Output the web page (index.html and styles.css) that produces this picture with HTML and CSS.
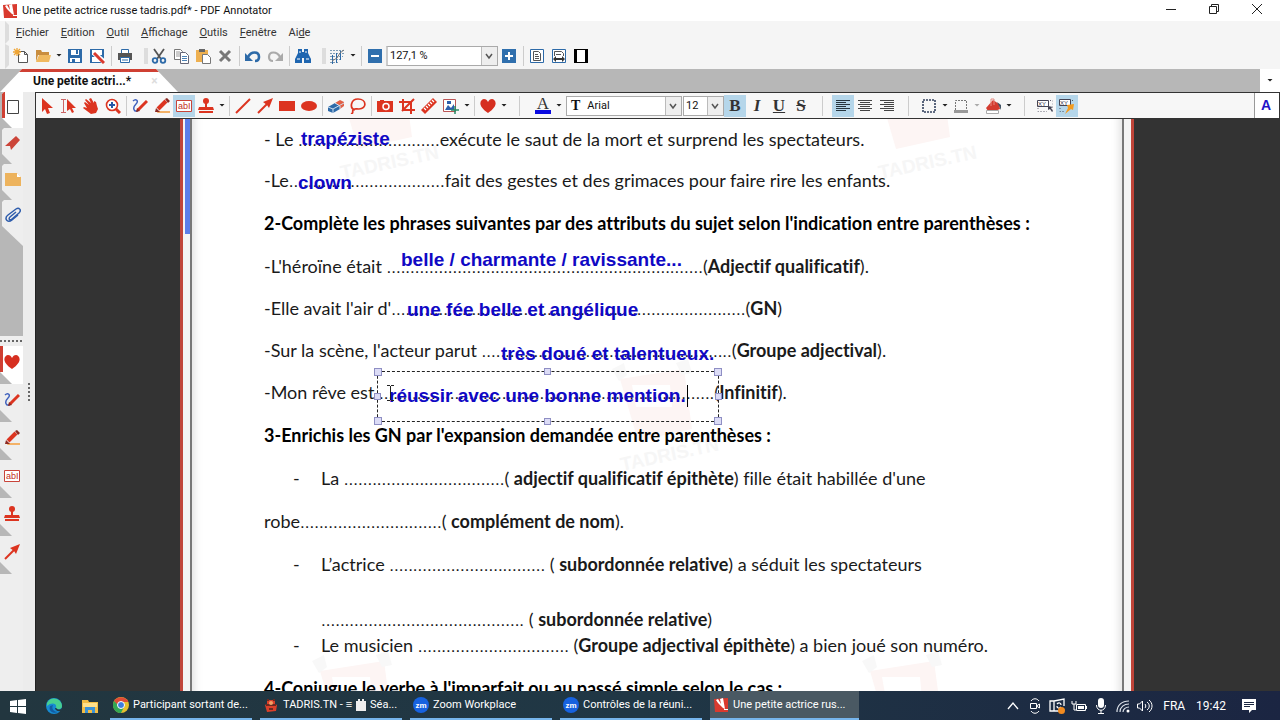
FILE: index.html
```html
<!doctype html>
<html lang="fr">
<head>
  <meta charset="utf-8">
  <title>Une petite actrice russe tadris.pdf* - PDF Annotator</title>
  <link rel="stylesheet" href="styles.css">
</head>
<body>
  <svg class="defs" aria-hidden="true">
    <symbol id="logo" viewBox="0 0 16 16"><path fill="#d93a2e" d="M1 2 15 1v14L2 15z"/><path fill="#fff" d="m3 3 2-1 3 5-1-5 3-1 2 11-2-1-5-5z"/><path fill="#fff" d="M11 12h4v1h-4z"/></symbol>
    <symbol id="new" viewBox="0 0 16 16"><path fill="#fff" stroke="#555" d="M5.500 3.500h6l3 3v8h-9zM11.500 3.500v3h3"/><path stroke="#efa535" stroke-width="1.300" d="M4 0v8M0 4h8M1 1l6 6M7 1 1 7"/></symbol>
    <symbol id="open" viewBox="0 0 16 16"><path fill="#c98d3e" d="M1 2h5l1 2h7v3H3l-2 7z"/><path fill="#f0b95f" d="M4 7h12l-2 7H1z"/></symbol>
    <symbol id="save" viewBox="0 0 16 16"><path fill="#2d6aa8" d="M1 1h14v14H1z"/><path fill="#fff" d="M4 2h8v5H4zM3 10h10v4H3z"/><path fill="#2d6aa8" d="M9 2h2v4H9zM5 11h3v3H5z"/></symbol>
    <symbol id="saveas" viewBox="0 0 16 16"><path fill="#2d6aa8" d="M1 1h14v14H1z"/><path fill="#fff" d="M3 2h10v5H3zM3 9h10v5H3z"/><path stroke="#fff" stroke-width="5" d="m5 5 10 9"/><path stroke="#d93a2e" stroke-width="3" d="m5 5 10 10"/></symbol>
    <symbol id="print" viewBox="0 0 16 16"><path fill="#fff" stroke="#2d6aa8" d="M4.500 1.500h7v4h-7z"/><path fill="#555" d="M1 5h14v7H1z"/><path fill="#fff" stroke="#2d6aa8" d="M3.500 9.500h9v5h-9z"/><path stroke="#2d6aa8" d="M5 12h6"/></symbol>
    <symbol id="cut" viewBox="0 0 16 16"><path stroke="#555" stroke-width="1.800" d="m3 1 7 10M13 1 6 11"/><g fill="none" stroke="#2d6aa8" stroke-width="1.800"><circle cx="4" cy="12.500" r="2.300"/><circle cx="12" cy="12.500" r="2.300"/></g></symbol>
    <symbol id="copy" viewBox="0 0 16 16"><path fill="#fff" stroke="#777" d="M1.500 1.500h6l2 2v8h-8z"/><path stroke="#999" d="M3 4h4M3 6h4M3 8h4"/><path fill="#fff" stroke="#667" d="M7.500 4.500h5l3 3v8h-8z"/><path stroke="#4d83b5" d="M9 8.500h5M9 10.500h5M9 12.500h5"/></symbol>
    <symbol id="paste" viewBox="0 0 16 16"><path fill="#eeb050" d="M1 2h12v12H1z"/><path fill="#666" d="M4 1h6v3H4z"/><path fill="#fff" stroke="#777" d="M7.500 6.500h5l3 3v6h-8z"/></symbol>
    <symbol id="delete" viewBox="0 0 16 16"><path stroke="#777" stroke-width="3" d="m3 3 10 10M13 3 3 13"/></symbol>
    <symbol id="undo" viewBox="0 0 16 16"><path fill="none" stroke="#2d6aa8" stroke-width="2.600" d="M3 9c3-6 11-6 11 0 0 3-2 4-4 4"/><path fill="#2d6aa8" d="M0 5v8h8z"/></symbol>
    <symbol id="redo" viewBox="0 0 16 16"><path fill="none" stroke="#aaa" stroke-width="2.200" d="M13 9C10 3 2 3 2 9c0 3 2 4 4 4"/><path fill="#aaa" d="M16 5v8H8z"/></symbol>
    <symbol id="find" viewBox="0 0 16 16"><path fill="#1f66b0" d="M3 1h4v3h2V1h4v4l3 6v4H9v-5H7v5H0v-4l3-6z"/><path stroke="#fff" d="M2 11h3M11 11h3M4 4h2M10 4h2"/></symbol>
    <symbol id="grid" viewBox="0 0 16 16"><path stroke="#7d9bb5" stroke-dasharray="2 1" d="M1 2.500h14M1 5.500h14M1 8.500h13M1 11.500h10M1 14.500h8"/><path stroke="#2d6aa8" d="M3.500 7v9M7.500 5v10M11.500 3v9"/><path fill="none" stroke="#777" d="m3 13 5-3 3-5 4-3"/></symbol>
    <symbol id="minus" viewBox="0 0 16 16"><path fill="#2f6fad" d="M1 1h14v14H1z"/><path fill="#fff" d="M4 7h8v2H4z"/></symbol>
    <symbol id="plus" viewBox="0 0 16 16"><path fill="#2f6fad" d="M1 1h14v14H1z"/><path fill="#fff" d="M4 7h3V4h2v3h3v2H9v3H7V9H4z"/></symbol>
    <symbol id="page" viewBox="0 0 16 16"><path fill="#fff" stroke="#2d6aa8" d="M1.500 1.500h13v13h-13z"/><path fill="none" stroke="#555" d="M4.500 3.500h5l2 2v7h-7zM6 6.500h3M6 8.500h4M6 10.500h4"/></symbol>
    <symbol id="pagewidth" viewBox="0 0 16 16"><path fill="#fff" stroke="#2d6aa8" d="M1.500 1.500h13v13h-13z"/><path fill="none" stroke="#555" d="M3.500 8V3.500h7l2 2V8M5 6.500h5"/><path fill="#333" d="m2 11 3-3v2h6V8l3 3-3 3v-2H5v2z"/></symbol>
    <symbol id="fullpage" viewBox="0 0 16 16"><path fill="#000" d="M1 1h14v14H1z"/><path fill="#fff" d="M4 2h8v12H4z"/></symbol>
    <symbol id="arrow" viewBox="0 0 16 16"><path fill="#dc3420" d="M3 0v14l3-3 2 5 3-1-2-5h5z"/></symbol>
    <symbol id="textarrow" viewBox="0 0 16 16"><path fill="none" stroke="#c66" d="M0 1.500h5M2.500 1v13M0 14.500h5"/><path fill="#dc3420" d="M6 1v12l3-2 2 4 2-1-2-4h4z"/></symbol>
    <symbol id="hand" viewBox="0 0 16 16"><path fill="#dc3420" d="m1 5 1-1 4 3-4-5 1-1 5 4-2-4 2-1 3 5V3l2 1 1 4 1 3-2 4-5 1-4-3-4-3 1-1 3 1z"/></symbol>
    <symbol id="zoom" viewBox="0 0 16 16"><path stroke="#dc3420" stroke-width="3" d="m10 10 5 5"/><circle cx="7" cy="7" r="5.500" fill="#fff" stroke="#dc3420" stroke-width="1.600"/><path stroke="#2457a8" stroke-width="2" d="M4 7h6M7 4v6"/></symbol>
    <symbol id="pen" viewBox="0 0 16 16"><path fill="none" stroke="#3e60bd" stroke-width="1.400" d="M1 3c3-3 6 0 3 3S1 11 3 13h3"/><path stroke="#dc3420" stroke-width="3" d="m6 12 9-9"/><path fill="#8e2a20" d="m4 14 1-4 3 3z"/></symbol>
    <symbol id="marker" viewBox="0 0 16 16"><path fill="#f3b268" d="M4 13h12v2H3z"/><path stroke="#dc3420" stroke-width="4" d="m4 11 8-8"/><path fill="#8c2a22" d="m11 1 2-1 3 3-2 2zM1 14l1-4 4 4z"/></symbol>
    <symbol id="textbox" viewBox="0 0 16 16"><path fill="#fff" stroke="#c8443a" d="M.500 2.500h15v11H.500z"/><text class="abl" x="2" y="11">abI</text></symbol>
    <symbol id="stamp" viewBox="0 0 16 16"><circle cx="8" cy="3" r="3" fill="#dc3420"/><path fill="#dc3420" d="M7 5h2v4h6l1 3H0l1-3h6zM1 13h14v2H1z"/></symbol>
    <symbol id="line" viewBox="0 0 16 16"><path stroke="#dc3420" stroke-width="2" d="M1 15 15 1"/></symbol>
    <symbol id="arrowline" viewBox="0 0 16 16"><path stroke="#dc3420" stroke-width="2" d="m1 15 9-9"/><path fill="#dc3420" d="m6 4 10-4-4 10-2-3z"/></symbol>
    <symbol id="rect" viewBox="0 0 16 16"><path fill="#dc3420" d="M0 3h16v10H0z"/></symbol>
    <symbol id="oval" viewBox="0 0 16 16"><ellipse cx="8" cy="8" rx="8" ry="5" fill="#dc3420"/></symbol>
    <symbol id="eraser" viewBox="0 0 16 16"><path fill="#2d6aa8" d="m0 9 7-4 5 3v3l-7 4-5-2z"/><path fill="#e26045" d="m7 5 5-3 4 2v4l-4 3V8z"/><path fill="none" stroke="#cde" d="m0 9 5 2 11-6M5 11v4M7 5l5 3v3"/></symbol>
    <symbol id="lasso" viewBox="0 0 16 16"><path fill="none" stroke="#dc3420" stroke-width="1.700" d="M5 12C-1 10 1 1 8 1c9 0 9 10 1 10-3 0-5-1-6 1s1 3-2 4"/></symbol>
    <symbol id="camera" viewBox="0 0 16 16"><path fill="#dc3420" d="M0 3h3V2h4v1h9v11H0z"/><circle cx="9" cy="8.500" r="3" fill="#dc3420" stroke="#fff" stroke-width="1.500"/></symbol>
    <symbol id="crop" viewBox="0 0 16 16"><path fill="none" stroke="#dc3420" stroke-width="2" d="M4 1v11h12M0 4h12v12M3 13 15 1"/></symbol>
    <symbol id="ruler" viewBox="0 0 16 16"><path fill="#dc3420" d="M0 12 12 0l4 4L4 16z"/><path stroke="#fff" stroke-width="1.200" d="m3 10 2 2m0-4 2 2m0-4 2 2m0-4 2 2m0-4 2 2"/></symbol>
    <symbol id="image" viewBox="0 0 16 16"><path fill="#fff" stroke="#b55" d="M.500 1.500h12v12H.500z"/><path fill="#2d5eab" d="m2 12 3-5 3 3 3-4v6zM4 3h4v3H4z"/><path stroke="#278a65" stroke-width="1.500" d="M12 8v8M8 12h8"/></symbol>
    <symbol id="heart" viewBox="0 0 16 16"><path fill="#d62f20" d="M8 15C-4 7 1 1 4 1c2 0 3 1 4 3 1-2 2-3 4-3 3 0 8 6-4 14z"/></symbol>
    <symbol id="left" viewBox="0 0 16 16"><path stroke="#26353f" d="M1 2.500h14M1 4.500h10M1 6.500h14M1 8.500h10M1 10.500h14M1 12.500h10"/></symbol>
    <symbol id="center" viewBox="0 0 16 16"><path stroke="#444" d="M1 2.500h14M3 4.500h10M1 6.500h14M3 8.500h10M1 10.500h14M3 12.500h10"/></symbol>
    <symbol id="right" viewBox="0 0 16 16"><path stroke="#444" d="M1 2.500h14M5 4.500h10M1 6.500h14M5 8.500h10M1 10.500h14M5 12.500h10"/></symbol>
    <symbol id="border" viewBox="0 0 16 16"><path fill="none" stroke="#33415e" stroke-width="1.600" stroke-dasharray="2 1" d="M2 2h12v12H2z"/></symbol>
    <symbol id="borderline" viewBox="0 0 16 16"><path fill="none" stroke="#777" stroke-dasharray="2 1" d="M2.500 12V2.500h11V12"/><path fill="#999" d="M1 12h14v3H1z"/></symbol>
    <symbol id="fill" viewBox="0 0 16 16"><path fill="#d33b30" d="m1 10 7-8 6 4 1 5-5 2H3z"/><path fill="none" stroke="#e68a80" d="M6 8V1h3v6"/><path fill="#456" d="m12 4 4 3v5z"/><path fill="#fff" stroke="#aaa" d="M1.500 12.500h12v3h-12z"/></symbol>
    <symbol id="xy" viewBox="0 0 16 16"><path fill="#fff" stroke="#445" d="M.500 2.500h11v6H.500z"/><text class="tiny" x="1" y="8">XY</text><path fill="none" stroke="#667" stroke-dasharray="1 2" d="M13 2.500h3v10M1 10v3.500h9"/><path fill="#445" d="m11 8 5 1-2 1 2 3-1 1-2-3-2 1z"/></symbol>
    <symbol id="xybolt" viewBox="0 0 16 16"><path fill="#fff" stroke="#445" d="M.500 1.500h11v6H.500z"/><text class="tiny" x="1" y="7">XY</text><path fill="none" stroke="#456" stroke-dasharray="1 2" d="M13 2.500h3M1 10v3.500h5"/><path fill="#f49b1e" d="m8 7 7-1-1 6-2-1-6 5 3-6z"/></symbol>
    <symbol id="thumb" viewBox="0 0 16 16"><path fill="#fff" stroke="#444" d="M2.500 1.500h11v13h-11z"/></symbol>
    <symbol id="ribbon" viewBox="0 0 16 16"><path fill="#cc4539" d="M0 11 11 1l4 4L6 15l-1-4z"/></symbol>
    <symbol id="note" viewBox="0 0 16 16"><path fill="#edb35d" d="M0 2h12l4 4v9H0z"/><path fill="#fff" d="M12 2v4h4z"/></symbol>
    <symbol id="clip" viewBox="0 0 16 16"><path fill="none" stroke="#2f5dac" stroke-width="1.500" d="m11 5-6 5c-2 2 0 4 2 2l7-6c3-3 0-6-3-4L3 8c-4 3-1 9 4 5l6-5"/></symbol>
    <symbol id="windows" viewBox="0 0 16 16"><path fill="#fff" d="m0 3 7-1v6H0zm8-1 8-1v7H8zM0 9h7v6l-7-1zm8 0h8v7l-8-1z"/></symbol>
    <symbol id="edge" viewBox="0 0 16 16"><circle cx="8" cy="8" r="8" fill="#178bd2"/><path fill="#47cf91" d="M1 5c4-8 15-4 15 3 0 4-6 4-6 1 1-4-5-5-9-1z"/><path fill="#125ca3" d="M4 8c-2 6 4 8 8 6-4 0-7-3-5-7z"/><path fill="#22363f" d="M10 10c2 2 4 2 6 0l-1 3c-3 1-6-1-6-3z"/></symbol>
    <symbol id="folder" viewBox="0 0 16 16"><path fill="#f3bd45" d="M0 2h6l1 2h9v11H0z"/><path fill="#ffe08a" d="M1 5h14v4H1z"/><path fill="#3c93d6" d="M3 9h10v6h-3v-3H6v3H3z"/></symbol>
    <symbol id="chrome" viewBox="0 0 16 16"><circle cx="8" cy="8" r="8" fill="#e7c02e"/><path fill="#df4b37" d="M1 4C4-1 12-1 15 4v1H8L5 9z"/><path fill="#33a854" d="M1 4c-3 6 1 12 7 12l3-6-5-1z"/><circle cx="8" cy="8" r="3.500" fill="#3d7de0" stroke="#fff"/></symbol>
    <symbol id="tadris" viewBox="0 0 16 16"><path fill="#db402a" d="M4 3h8v4l2 1-1 6-9 1-2-7 2-1z"/><path fill="#6b2922" d="M3 7h10v2H3zM6 11h4v2H6zM4 2h2v2H4zM10 2h2v2h-2z"/><circle cx="8" cy="6" r="2" fill="#f2a167"/></symbol>
    <symbol id="zm" viewBox="0 0 16 16"><circle cx="8" cy="8" r="8" fill="#1762df"/><text class="zm" x="8" y="11">zm</text></symbol>
    <symbol id="up" viewBox="0 0 16 16"><path fill="none" stroke="#fff" stroke-width="1.300" d="m3 11 5-6 5 6"/></symbol>
    <symbol id="meet" viewBox="0 0 16 16"><path fill="none" stroke="#fff" d="M3.500 5.500h6v5h-6zM9.500 8l3-2v4zM4 3c2-3 6-3 8 0M4 13c2 3 6 3 8 0"/></symbol>
    <symbol id="sync" viewBox="0 0 16 16"><path fill="none" stroke="#fff" stroke-width="1.300" d="M1 3h4v10H1zM5 3l10-2v7M5 13h6M8 6c2-2 4-1 4 1M12 9c-2 2-4 1-4-1"/><circle cx="12.500" cy="12.500" r="3.500" fill="#f28b20"/></symbol>
    <symbol id="battery" viewBox="0 0 16 16"><path fill="none" stroke="#fff" d="M5.500 6.500h9v6h-9zM1 3v3h4V3M3 6v6h2"/><path fill="#fff" d="M7 8h6v3H7zM15 8h1v3h-1z"/></symbol>
    <symbol id="mic" viewBox="0 0 16 16"><rect x="5" y="0" width="6" height="10" rx="3" fill="#fff"/><path fill="none" stroke="#fff" d="M3.500 7c0 7 9 7 9 0M8 12v4M5 15.500h6"/></symbol>
    <symbol id="wifi" viewBox="0 0 16 16"><path fill="none" stroke="#dde3ea" stroke-width="1.200" d="M2 14C2 7 7 3 14 3M5 14c0-5 4-8 9-8M8 14c0-3 3-5 6-5"/><circle cx="13" cy="13" r="1.500" fill="#fff"/></symbol>
    <symbol id="sound" viewBox="0 0 16 16"><path fill="none" stroke="#fff" d="M.500 6h2l3-3v10l-3-3h-2zM8 6c1 1 1 3 0 4M10 4c3 2 3 6 0 8M12 2c4 3 4 9 0 12"/></symbol>
    <symbol id="message" viewBox="0 0 16 16"><path fill="#fff" d="M1 1h14v11h-4l-3 3v-3H1z"/><path stroke="#1b2742" d="M3 4.500h10M3 6.500h10M3 8.500h6"/></symbol>
    <symbol id="mark" viewBox="0 0 120 120"><path fill="#fdf5f4" d="M18 20 82 10l8 60-54 12z"/><path fill="#fff" d="M30 26h38l2 22H34z"/><path fill="#f8f8f8" d="m10 10 12-6 3 12-8 6zM74 4l12-4 4 14-10 2z"/><text class="mark-text" x="20" y="112" transform="rotate(-12 20 112)">TADRIS.TN</text></symbol>
  </svg>

  <header class="titlebar">
    <svg class="ic"><use href="#logo"/></svg>
    <h1>Une petite actrice russe tadris.pdf* - PDF Annotator</h1>
    <div class="winbtns">
      <button aria-label="Réduire"><svg viewBox="0 0 12 12"><path d="M1 6.500h10"/></svg></button>
      <button aria-label="Restaurer"><svg viewBox="0 0 12 12"><path d="M1.500 3.500h7v7h-7zM3.500 3V1.500h7v7H9"/></svg></button>
      <button aria-label="Fermer"><svg viewBox="0 0 12 12"><path d="m1 1 10 10M11 1 1 11"/></svg></button>
    </div>
  </header>

  <nav class="menu">
    <a href="#"><u>F</u>ichier</a>
    <a href="#"><u>E</u>dition</a>
    <a href="#"><u>O</u>util</a>
    <a href="#"><u>A</u>ffichage</a>
    <a href="#"><u>O</u>utils</a>
    <a href="#"><u>F</u>enêtre</a>
    <a href="#">Ai<u>d</u>e</a>
  </nav>

  <div class="toolbar main-tools">
    <button aria-label="Nouveau"><svg class="ic"><use href="#new"/></svg></button>
    <button aria-label="Ouvrir"><svg class="ic"><use href="#open"/></svg></button>
    <i class="drop"></i>
    <button aria-label="Enregistrer"><svg class="ic"><use href="#save"/></svg></button>
    <button aria-label="Enregistrer sous"><svg class="ic"><use href="#saveas"/></svg></button>
    <i class="sep"></i>
    <button aria-label="Imprimer"><svg class="ic"><use href="#print"/></svg></button>
    <i class="grip"></i>
    <button aria-label="Couper"><svg class="ic"><use href="#cut"/></svg></button>
    <button aria-label="Copier"><svg class="ic"><use href="#copy"/></svg></button>
    <button aria-label="Coller"><svg class="ic"><use href="#paste"/></svg></button>
    <button aria-label="Supprimer"><svg class="ic"><use href="#delete"/></svg></button>
    <i class="sep"></i>
    <button aria-label="Annuler"><svg class="ic"><use href="#undo"/></svg></button>
    <button aria-label="Rétablir"><svg class="ic"><use href="#redo"/></svg></button>
    <i class="sep"></i>
    <button aria-label="Rechercher"><svg class="ic"><use href="#find"/></svg></button>
    <i class="grip"></i>
    <button aria-label="Grille"><svg class="ic"><use href="#grid"/></svg></button>
    <i class="drop"></i>
    <i class="sep"></i>
    <button aria-label="Zoom arrière"><svg class="ic"><use href="#minus"/></svg></button>
    <select class="zoom-level" aria-label="Zoom"><option>127,1 %</option></select>
    <button aria-label="Zoom avant"><svg class="ic"><use href="#plus"/></svg></button>
    <i class="sep"></i>
    <button aria-label="Page entière"><svg class="ic"><use href="#page"/></svg></button>
    <button aria-label="Largeur de page"><svg class="ic"><use href="#pagewidth"/></svg></button>
    <button aria-label="Plein écran"><svg class="ic"><use href="#fullpage"/></svg></button>
  </div>

  <div class="tabs">
    <div class="tab"><span>Une petite actri...*</span><button aria-label="Fermer l'onglet">×</button></div>
    <button class="tab-list" aria-label="Liste des onglets"><i class="drop"></i></button>
  </div>

  <div class="workspace">
    <aside class="sidebar">
      <div class="side-top">
        <button class="on" aria-label="Miniatures"><svg class="ic"><use href="#thumb"/></svg></button>
        <button aria-label="Signets"><svg class="ic"><use href="#ribbon"/></svg></button>
        <button aria-label="Notes"><svg class="ic"><use href="#note"/></svg></button>
        <button class="last" aria-label="Pièces jointes"><svg class="ic"><use href="#clip"/></svg></button>
      </div>
      <i class="dots"></i>
      <div class="side-bottom">
        <button class="on" aria-label="Favoris"><svg class="ic"><use href="#heart"/></svg></button>
        <button aria-label="Stylo"><svg class="ic"><use href="#pen"/></svg></button>
        <button aria-label="Surligneur"><svg class="ic"><use href="#marker"/></svg></button>
        <button aria-label="Texte"><svg class="ic"><use href="#textbox"/></svg></button>
        <button aria-label="Tampon"><svg class="ic"><use href="#stamp"/></svg></button>
        <button class="last" aria-label="Flèche"><svg class="ic"><use href="#arrowline"/></svg></button>
      </div>
    </aside>
    <div class="splitter"><i></i></div>

    <main>
      <div class="toolbar edit-tools">
        <button aria-label="Sélection"><svg class="ic"><use href="#arrow"/></svg></button>
        <button aria-label="Sélection de texte"><svg class="ic"><use href="#textarrow"/></svg></button>
        <button aria-label="Main"><svg class="ic"><use href="#hand"/></svg></button>
        <button aria-label="Loupe"><svg class="ic"><use href="#zoom"/></svg></button>
        <i class="sep"></i>
        <button aria-label="Stylo"><svg class="ic"><use href="#pen"/></svg></button>
        <button aria-label="Surligneur"><svg class="ic"><use href="#marker"/></svg></button>
        <button class="on" aria-label="Texte"><svg class="ic"><use href="#textbox"/></svg></button>
        <button aria-label="Tampon"><svg class="ic"><use href="#stamp"/></svg></button>
        <i class="drop"></i>
        <i class="sep"></i>
        <button aria-label="Ligne"><svg class="ic"><use href="#line"/></svg></button>
        <button aria-label="Flèche"><svg class="ic"><use href="#arrowline"/></svg></button>
        <button aria-label="Rectangle"><svg class="ic"><use href="#rect"/></svg></button>
        <button aria-label="Ellipse"><svg class="ic"><use href="#oval"/></svg></button>
        <i class="sep"></i>
        <button aria-label="Gomme"><svg class="ic"><use href="#eraser"/></svg></button>
        <button aria-label="Lasso"><svg class="ic"><use href="#lasso"/></svg></button>
        <i class="sep"></i>
        <button aria-label="Capture"><svg class="ic"><use href="#camera"/></svg></button>
        <button aria-label="Rogner"><svg class="ic"><use href="#crop"/></svg></button>
        <button aria-label="Règle"><svg class="ic"><use href="#ruler"/></svg></button>
        <button aria-label="Image"><svg class="ic"><use href="#image"/></svg></button>
        <i class="drop"></i>
        <i class="sep"></i>
        <button aria-label="Favoris"><svg class="ic"><use href="#heart"/></svg></button>
        <i class="drop"></i>
        <i class="sep wide"></i>
        <button class="letter color" aria-label="Couleur du texte">A</button>
        <i class="drop"></i>
        <label class="font"><b>T</b><select aria-label="Police"><option>Arial</option></select></label>
        <select class="size" aria-label="Taille"><option>12</option></select>
        <button class="letter on" aria-label="Gras"><b>B</b></button>
        <button class="letter" aria-label="Italique"><em>I</em></button>
        <button class="letter" aria-label="Souligné"><u>U</u></button>
        <button class="letter" aria-label="Barré"><s>S</s></button>
        <i class="sep wide"></i>
        <button class="on" aria-label="Aligner à gauche"><svg class="ic"><use href="#left"/></svg></button>
        <button aria-label="Centrer"><svg class="ic"><use href="#center"/></svg></button>
        <button aria-label="Aligner à droite"><svg class="ic"><use href="#right"/></svg></button>
        <i class="sep wide"></i>
        <button aria-label="Bordure"><svg class="ic"><use href="#border"/></svg></button>
        <i class="drop"></i>
        <button aria-label="Trait"><svg class="ic"><use href="#borderline"/></svg></button>
        <i class="drop off"></i>
        <button aria-label="Remplissage"><svg class="ic"><use href="#fill"/></svg></button>
        <i class="drop"></i>
        <i class="sep wide"></i>
        <button aria-label="Position"><svg class="ic"><use href="#xy"/></svg></button>
        <button class="on" aria-label="Position rapide"><svg class="ic"><use href="#xybolt"/></svg></button>
        <span class="style-box">A</span>
      </div>

      <div class="canvas">
        <div class="sheet">
          <article class="page">
            <svg class="mark m1"><use href="#mark"/></svg>
            <svg class="mark m2"><use href="#mark"/></svg>
            <svg class="mark m3"><use href="#mark"/></svg>
            <svg class="mark m4"><use href="#mark"/></svg>
            <svg class="mark m5"><use href="#mark"/></svg>

            <p class="first">- Le <span class="blank">..............................</span>exécute le saut de la mort et surprend les spectateurs.</p>
            <p>-Le<span class="blank">.................................</span>fait des gestes et des grimaces pour faire rire les enfants.</p>
            <h2>2-Complète les phrases suivantes par des attributs du sujet selon l'indication entre parenthèses :</h2>
            <p>-L'héroïne était <span class="blank">...................................................................</span>(<b>Adjectif qualificatif</b>).</p>
            <p>-Elle avait l'air d'<span class="blank">...........................................................................</span>(<b>GN</b>)</p>
            <p>-Sur la scène, l'acteur parut <span class="blank">.....................................................</span>(<b>Groupe adjectival</b>).</p>
            <p>-Mon rêve est <span class="blank">.......................................................................</span>(<b>Infinitif</b>).</p>
            <h2>3-Enrichis les GN par l'expansion demandée entre parenthèses :</h2>
            <p class="item">La <span class="blank">..................................</span>( <b>adjectif qualificatif épithète</b>) fille était habillée d'une</p>
            <p class="tall">robe<span class="blank">..............................</span>( <b>complément de nom</b>).</p>
            <p class="item">L’actrice <span class="blank">.................................</span> ( <b>subordonnée relative</b>) a séduit les spectateurs</p>
            <p class="more"><span class="blank">...........................................</span> ( <b>subordonnée relative</b>)</p>
            <p class="item short">Le musicien <span class="blank">................................</span> (<b>Groupe adjectival épithète</b>) a bien joué son numéro.</p>
            <h2 class="next">4-Conjugue le verbe à l'imparfait ou au passé simple selon le cas :</h2>

            <div class="note n1">trapéziste</div>
            <div class="note n2">clown</div>
            <div class="note n3">belle / charmante / ravissante...</div>
            <div class="note n4">une fée belle et angélique</div>
            <div class="note n5">très doué et talentueux.</div>
            <div class="note n6">
              <span class="typing">réussir avec une bonne mention.</span>
              <svg class="ibeam" viewBox="0 0 7 16"><path d="M0 .500h3m1 0h3M3.500 1v14M0 15.500h3m1 0h3"/></svg>
              <i class="h tl"></i><i class="h tc"></i><i class="h tr"></i><i class="h ml"></i><i class="h mr"></i><i class="h bl"></i><i class="h bc"></i><i class="h br"></i>
            </div>
          </article>
        </div>
      </div>
    </main>
  </div>

  <footer class="taskbar">
    <button class="pin" aria-label="Démarrer"><svg class="ic"><use href="#windows"/></svg></button>
    <button class="pin" aria-label="Edge"><svg class="ic"><use href="#edge"/></svg></button>
    <button class="pin" aria-label="Explorateur"><svg class="ic"><use href="#folder"/></svg></button>
    <div class="tasks">
      <button class="task"><svg class="ic"><use href="#chrome"/></svg>Participant sortant de...</button>
      <button class="task"><svg class="ic"><use href="#tadris"/></svg>TADRIS.TN - ≡ <svg class="cal" viewBox="0 0 10 12"><path fill="#eee" d="M0 2h10v10H0zM2 0h2v3H2zM6 0h2v3H6z"/></svg> Séa...</button>
      <button class="task"><svg class="ic"><use href="#zm"/></svg>Zoom Workplace</button>
      <button class="task"><svg class="ic"><use href="#zm"/></svg>Contrôles de la réuni...</button>
      <button class="task current"><svg class="ic"><use href="#logo"/></svg>Une petite actrice rus...</button>
    </div>
    <div class="tray">
      <svg class="ic"><use href="#up"/></svg>
      <svg class="ic"><use href="#meet"/></svg>
      <svg class="ic"><use href="#sync"/></svg>
      <svg class="ic"><use href="#battery"/></svg>
      <svg class="ic"><use href="#mic"/></svg>
      <svg class="ic"><use href="#wifi"/></svg>
      <svg class="ic"><use href="#sound"/></svg>
      <span>FRA</span>
      <time>19:42</time>
      <svg class="ic"><use href="#message"/></svg>
    </div>
  </footer>
</body>
</html>
```
FILE: styles.css
```css
* {
  box-sizing: border-box;
}

body {
  margin: 0;
  height: 100vh;
  display: flex;
  flex-direction: column;
  overflow: hidden;
  background: #f5f5f5;
  color: #111;
  font-family: Roboto, "Open Sans", sans-serif;
  font-size: 11px;
}

button, select {
  border: 0;
  padding: 0;
  margin: 0;
  background: none;
  color: inherit;
  font: inherit;
}

.defs {
  display: none;
}

.ic {
  width: 16px;
  height: 16px;
  flex: none;
}

.abl {
  font: 9px "Liberation Sans", sans-serif;
  fill: #c22f25;
}

.tiny {
  font: 6px "Liberation Sans", sans-serif;
  fill: #334;
}

.zm {
  font: bold 8px "Liberation Sans", sans-serif;
  fill: #fff;
  text-anchor: middle;
}

.mark-text {
  font: bold 19px "Liberation Sans", sans-serif;
  fill: #f6f6f6;
}

/* title and menu */

.titlebar {
  flex: none;
  display: flex;
  align-items: center;
  height: 21px;
  padding: 0 2px;
  gap: 4px;
  background: #fff;
}

.titlebar h1 {
  margin: 0;
  font-size: 11px;
  font-weight: normal;
}

.winbtns {
  display: flex;
  margin-left: auto;
}

.winbtns button {
  width: 43px;
  height: 20px;
}

.winbtns svg {
  width: 12px;
  height: 12px;
  fill: none;
  stroke: #222;
}

.menu {
  flex: none;
  display: flex;
  align-items: center;
  gap: 12px;
  height: 23px;
  margin-left: 5px;
  padding-left: 7px;
  border-left: 4px solid #ddd;
  border-top: 4px solid #f5f5f5;
  border-bottom: 4px solid #f5f5f5;
}

.menu a {
  color: #333;
  text-decoration: none;
}

/* toolbars */

.toolbar {
  flex: none;
  display: flex;
  align-items: center;
}

.toolbar button {
  display: flex;
  align-items: center;
  justify-content: center;
  flex: none;
  width: 22px;
  height: 22px;
}

.toolbar .on {
  background: #b5d6ea;
}

.main-tools {
  height: 25px;
  margin-left: 5px;
  padding-left: 1px;
  border-left: 4px solid #ddd;
  border-top: 2px solid #f5f5f5;
  border-bottom: 4px solid #f5f5f5;
}

.drop {
  flex: none;
  width: 10px;
  height: 4px;
  background: #222;
  clip-path: polygon(2px 0, 8px 0, 5px 3px);
}

.drop.off {
  background: #aaa;
}

.sep {
  flex: none;
  width: 6px;
  height: 20px;
  background: linear-gradient(#ccc, #ccc) center / 1px 100% no-repeat;
}

.grip {
  flex: none;
  width: 12px;
  height: 16px;
  background: linear-gradient(#ddd, #ddd) 8px 0 / 4px 100% no-repeat;
}

select {
  appearance: none;
  height: 20px;
  border: 1px solid #aaa;
  padding-left: 2px;
  background: #fff url("data:image/svg+xml,%3Csvg xmlns='http://www.w3.org/2000/svg' width='16' height='18'%3E%3Cpath fill='%23eee' d='M0 0h16v18H0z'/%3E%3Cpath stroke='%23bbb' d='M.5 0v18'/%3E%3Cpath fill='none' stroke='%23555' stroke-width='1.5' d='m5 7 3 4 3-4'/%3E%3C/svg%3E") right center no-repeat;
}

.zoom-level {
  width: 112px;
  border-left-width: 2px;
  border-left-color: #ccc;
}

.edit-tools {
  height: 27px;
  border: 1px solid #333;
  background: #f7f7f7;
}

.edit-tools .sep {
  width: 5px;
}

.edit-tools .wide {
  width: 20px;
}

.letter {
  font-family: "Liberation Serif", serif;
  font-size: 17px;
  line-height: 20px;
  color: #333;
}

.letter em, .letter u, .letter s {
  font-weight: bold;
}

.edit-tools .color {
  width: 16px;
  height: 16px;
  margin: 0 3px 0 6px;
  border-bottom: 4px solid #0a0ae0;
  line-height: 12px;
}

.font {
  display: flex;
  align-items: center;
  width: 116px;
  margin: 0 1px 0 2px;
  border: 1px solid #aaa;
  background: #fff;
}

.font b {
  padding: 0 5px 0 4px;
  font-family: "Liberation Serif", serif;
  font-size: 14px;
}

.font select {
  flex: 1;
  height: 18px;
  border: 0;
}

.size {
  width: 41px;
}

.style-box {
  margin-left: auto;
  width: 25px;
  height: 25px;
  border-left: 1px solid #999;
  padding-left: 6px;
  background: #fff;
  color: #2412c8;
  font: bold 14px/25px "Liberation Sans", sans-serif;
}

/* document tabs */

.tabs {
  flex: none;
  display: flex;
  justify-content: space-between;
  height: 23px;
  background: #b7b7b7;
}

.tab {
  display: flex;
  align-items: center;
  gap: 20px;
  width: 178px;
  padding: 0 0 2px 33px;
  border-top: 3px solid #cf4033;
  background: #fff;
  font-size: 12px;
  font-weight: bold;
  clip-path: polygon(22px 0, 156px 0, 178px 100%, 0 100%);
}

.tab button {
  color: #ddd;
}

.tab-list {
  display: flex;
  align-items: center;
  justify-content: center;
  width: 20px;
  background: #fff;
}

/* side panels */

.workspace {
  flex: 1;
  display: flex;
  min-height: 0;
}

.sidebar {
  width: 23px;
  display: flex;
  flex-direction: column;
  background: #b7b7b7;
}

.sidebar button {
  display: flex;
  align-items: center;
  padding-left: 5px;
  width: 100%;
  background: #eee;
}

.side-top {
  height: 244px;
}

.side-top button {
  height: 36px;
  padding-bottom: 6px;
  clip-path: polygon(4px 0, 100% 0, 100% 100%, 12px 100%, 2px 26px, 2px 2px);
}

.sidebar .on {
  background: linear-gradient(#cf4033, #cf4033) 2px 0 / 3px 26px no-repeat #fff;
}

.side-top .last {
  height: 46px;
  padding-bottom: 16px;
  clip-path: polygon(4px 0, 100% 0, 100% 100%, 2px 26px, 2px 2px);
}

.dots {
  height: 10px;
  background: radial-gradient(circle, #666 1px, transparent 1px) 3px 3px / 4px 4px repeat-x #eee;
}

.side-bottom {
  flex: 1;
  background: #eee;
}

.side-bottom button {
  height: 38px;
  padding: 0 0 7px 4px;
  background: linear-gradient(45deg, #b7b7b7 8px, transparent 9px);
}

.side-bottom .on {
  background: linear-gradient(#cf4033, #cf4033) 0 0 / 3px 26px no-repeat, linear-gradient(45deg, #b7b7b7 8px, #fff 9px);
}

.splitter {
  display: flex;
  align-items: center;
  justify-content: center;
  width: 12px;
  background: #ececec;
}

.splitter i {
  width: 4px;
  height: 20px;
  background: radial-gradient(circle, #666 1px, transparent 1px) 0 0 / 4px 4px;
}

main {
  flex: 1;
  min-width: 0;
  display: flex;
  flex-direction: column;
}

/* the document */

.canvas {
  flex: 1;
  min-height: 0;
  overflow: hidden;
  padding-right: 2px;
  border-left: 1px solid #222;
  background: #333;
}

.sheet {
  max-width: 954px;
  height: 100%;
  margin: 0 auto;
  padding: 0 7px;
  border: solid #c0453a;
  border-width: 0 3px;
  background: linear-gradient(#5b7ee9, #5b7ee9) 2px 0 / 5px 115px no-repeat #f3f3f3;
}

.page {
  position: relative;
  height: 100%;
  overflow: hidden;
  padding-left: 72px;
  border: solid #777;
  border-width: 0 2px;
  background: #fff;
  box-shadow: inset 12px 0 10px -10px #ddd, inset -12px 0 10px -10px #ddd;
  color: #1a1a1a;
  font-family: Lato, "Open Sans", sans-serif;
  font-size: 18px;
  font-variant-ligatures: none;
  white-space: nowrap;
}

.page p, .page h2 {
  position: relative;
  margin: 0;
  font-size: 18px;
  line-height: 42px;
}

.page h2 {
  color: #000;
  line-height: 44px;
}

.page .first {
  line-height: 40px;
}

.page .blank {
  font-family: "Liberation Sans", sans-serif;
  font-size: 17px;
  line-height: 1;
}

.page .item {
  padding-left: 57px;
  line-height: 43px;
}

.page .item::before {
  content: "-";
  display: inline-block;
  width: 28px;
  margin-left: -28px;
}

.page .tall {
  line-height: 43px;
}

.page .more {
  margin-top: 20px;
  padding-left: 57px;
  line-height: 26px;
}

.page .short {
  line-height: 26px;
}

.page .next {
  margin-top: 8px;
}

.mark {
  position: absolute;
  width: 120px;
  height: 120px;
}

.m1 { left: 130px; top: -52px; }
.m2 { left: 668px; top: -52px; }
.m3 { left: 410px; top: 240px; }
.m4 { left: 110px; top: 532px; }
.m5 { left: 660px; top: 532px; }

/* typed annotations */

.note {
  position: absolute;
  color: #1008c4;
  font: bold 19px/22px "Liberation Sans", Arial, sans-serif;
}

.n1 { left: 109px; top: 9px; }
.n2 { left: 106px; top: 53px; }
.n3 { left: 209px; top: 130px; }
.n4 { left: 215px; top: 180px; }
.n5 { left: 309px; top: 224px; }

.n6 {
  left: 185px;
  top: 252px;
  width: 342px;
  height: 51px;
  padding: 13px 0 0 11px;
  border: 1px dashed #222;
}

.typing {
  display: inline-block;
  padding-right: 1px;
  border-right: 1px solid #000;
}

.ibeam {
  position: absolute;
  left: 9px;
  top: 13px;
  width: 7px;
  height: 16px;
  fill: none;
  stroke: #222;
}

.h {
  position: absolute;
  width: 8px;
  height: 8px;
  border: 1px solid #8f8fc4;
  background: #dcdcf6;
}

.tl, .tc, .tr { top: -4px; }
.bl, .bc, .br { bottom: -4px; }
.tl, .ml, .bl { left: -4px; }
.tr, .mr, .br { right: -4px; }
.tc, .bc { left: calc(50% - 4px); }
.ml, .mr { top: 21px; }

.tc, .bc, .ml, .mr {
  width: 7px;
  height: 7px;
}

/* taskbar */

.taskbar {
  flex: none;
  display: flex;
  align-items: center;
  height: 29px;
  background: linear-gradient(90deg, #22363f, #203745 50%, #1b2542);
  color: #fff;
}

.pin {
  display: flex;
  justify-content: center;
  width: 36px;
}

.tasks {
  display: flex;
  gap: 8px;
  margin-left: 2px;
}

.task {
  display: flex;
  align-items: center;
  gap: 4px;
  width: 142px;
  height: 29px;
  padding-left: 3px;
  border-bottom: 2px solid #76b5ec;
  white-space: nowrap;
}

.task.current {
  width: 149px;
  background: #4a5963;
}

.cal {
  width: 10px;
  height: 12px;
}

.tray {
  display: flex;
  align-items: center;
  gap: 6px;
  margin-left: auto;
  padding-right: 23px;
}

.tray span {
  margin-left: 4px;
}

.tray span, .tray time {
  font-size: 12px;
}

.tray time {
  margin: 0 9px 0 5px;
}
```
